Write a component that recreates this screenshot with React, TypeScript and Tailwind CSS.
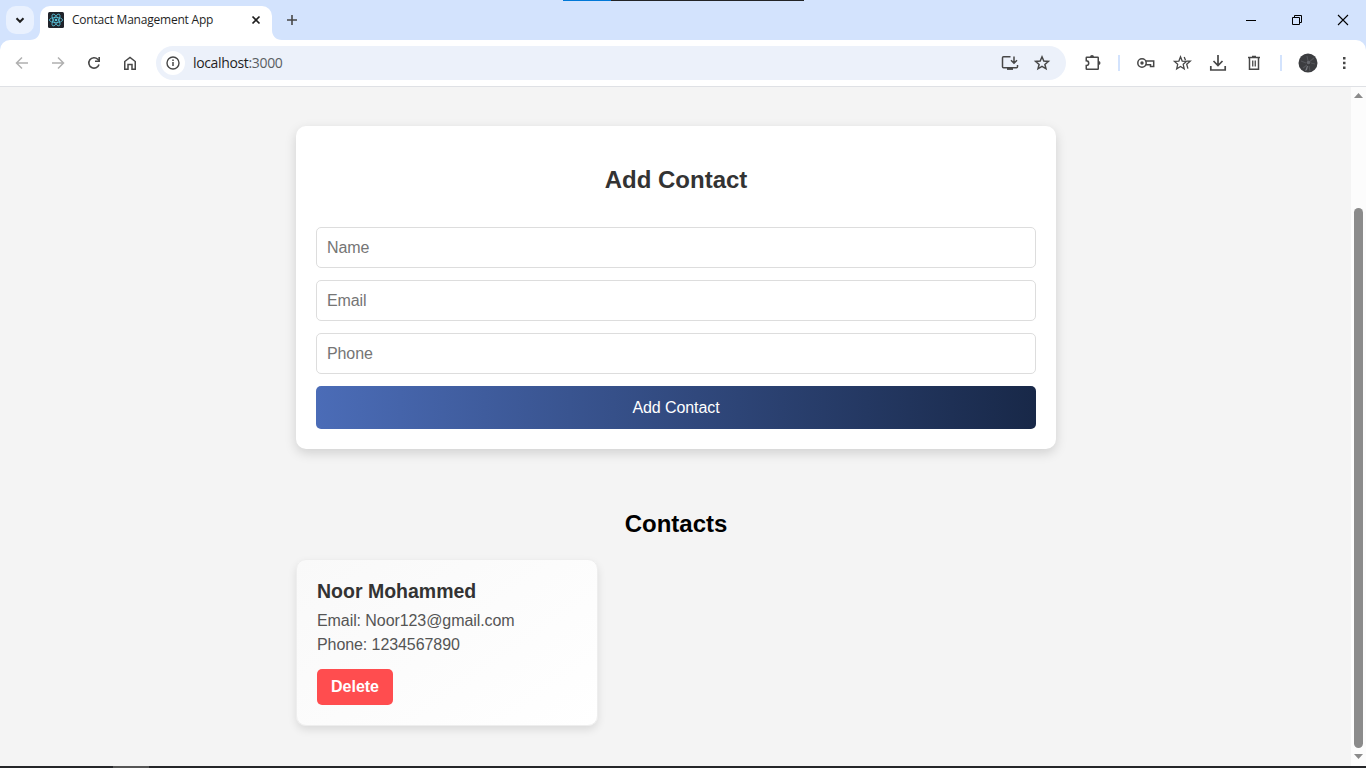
import React from 'react';

const chromeFont = "font-['Open_Sans','Noto_Sans',sans-serif]";

type IconProps = { children: React.ReactNode; className?: string; size?: number };

function Icon({ children, className = '', size = 20 }: IconProps) {
  return (
    <svg width={size} height={size} viewBox={`0 0 ${size} ${size}`} fill="none" stroke="currentColor" strokeWidth="1.5" className={`block shrink-0 ${className}`}>
      {children}
    </svg>
  );
}

function ReactLogo() {
  return (
    <svg width="16" height="16" viewBox="0 0 16 16" fill="none" stroke="#58c4dc" strokeWidth="0.8" className="block shrink-0">
      <rect width="16" height="16" rx="1.5" fill="#20232a" stroke="none" />
      <ellipse cx="8" cy="8" rx="6.6" ry="2.6" />
      <ellipse cx="8" cy="8" rx="6.6" ry="2.6" transform="rotate(60 8 8)" />
      <ellipse cx="8" cy="8" rx="6.6" ry="2.6" transform="rotate(120 8 8)" />
      <circle cx="8" cy="8" r="1.3" fill="#58c4dc" stroke="none" />
    </svg>
  );
}

function TabStrip() {
  return (
    <div className="flex h-10 shrink-0 bg-[#d3e3fd]">
      <div className="ml-1.5 mt-1.5 flex h-7 w-7 items-center justify-center rounded-[10px] bg-[#e9f1fe]">
        <Icon size={12} className="text-[#1f1f1f]"><path d="M2.5 4.3 6 7.8l3.5-3.5" strokeWidth="2" /></Icon>
      </div>
      <svg width="10" height="10" viewBox="0 0 10 10" className="-ml-1 mr-0 shrink-0 self-end"><path d="M10 0v10H0C6 10 10 6 10 0Z" fill="#fff" /></svg>
      <div className="mt-1.5 flex w-[232px] items-center rounded-t-[10px] bg-white pb-1.5 pl-2">
        <ReactLogo />
        <span className="ml-2 w-[176px] whitespace-nowrap text-[12px] leading-4 tracking-[-0.21px] text-[#1f1f1f]">Contact Management App</span>
        <Icon size={16} className="text-[#1f1f1f]"><path d="m4.5 4.5 7 7m0-7-7 7" strokeWidth="1.7" /></Icon>
      </div>
      <svg width="10" height="10" viewBox="0 0 10 10" className="shrink-0 self-end"><path d="M0 0v10h10C4 10 0 6 0 0Z" fill="#fff" /></svg>
      <Icon size={20} className="mt-2.5 text-[#474747]"><path d="M10 5v10M5 10h10" strokeWidth="1.6" /></Icon>
      <div className="flex-1">
        <div className="ml-[261px] flex h-px">
          <div className="w-12 bg-[#0078d7]" />
          <div className="w-[193px] bg-[#222426]" />
        </div>
      </div>
      <div className="mr-[15px] mt-3 flex gap-[30px]">
        <Icon size={16} className="text-black"><path d="M3 8.5h10" strokeWidth="1" /></Icon>
        <Icon size={16} className="text-black"><path d="M3.5 5.5h7v7h-7zM5.5 5.5v-2h7v7h-2" strokeWidth="1" /></Icon>
        <Icon size={16} className="text-black"><path d="m3 3 10 10M13 3 3 13" strokeWidth="1.1" /></Icon>
      </div>
    </div>
  );
}

function Toolbar() {
  return (
    <div className="h-[47px] shrink-0 bg-[#d3e3fd] text-[#474747]">
      <div className="flex h-full items-center rounded-t-[10px] border-b border-[#dfe1e5] bg-white pl-3">
        <Icon className="text-[#b0b0b0]"><path d="M16 10H4.5M10 4.5 4.5 10l5.5 5.5" /></Icon>
        <Icon className="ml-4 text-[#b0b0b0]"><path d="M4 10h11.5M10 4.5l5.5 5.5-5.5 5.5" /></Icon>
        <Icon className="ml-4"><path d="M15 11.5A5.2 5.2 0 1 1 13.8 6.3L15 7.5" strokeWidth="1.6" /><path d="M15.2 4v4.2H11" strokeWidth="1.6" /></Icon>
        <Icon className="ml-4"><path d="M4.75 8.5 10 4.5l5.250 4v7.750H12V11.500H8v4.750H4.750Z" /></Icon>
        <div className="ml-4 flex h-[34px] w-[910px] items-center rounded-full bg-[#ecf1fa] pl-[5px]">
          <div className="flex h-6 w-6 items-center justify-center rounded-full bg-white">
            <Icon><circle cx="10" cy="10" r="6" strokeWidth="1.4" /><path d="M10 9v4M10 6.5V8" /></Icon>
          </div>
          <span className="ml-2 flex-1 whitespace-nowrap text-[14px] leading-5 tracking-[-0.35px] text-[#1f1f1f]">localhost<span className="text-[#5a5e63]">:3000</span></span>
          <Icon><path d="M10.500 3.750H3.500a1 1 0 0 0-1 1v9a1 1 0 0 0 1 1h13a1 1 0 0 0 1-1V12M14 3.500v6M11 7.200l3 3 3-3" /><path d="M7 15.700h6" strokeWidth="2.400" /></Icon>
          <Icon className="ml-3 mr-3.5"><Star /></Icon>
        </div>
        <Icon className="ml-4">
          <path d="M4.750 4.250h11a.5.500 0 0 1 .5.500v11a.5.500 0 0 1-.5.500h-11a.5.500 0 0 1-.5-.5V12.500c3.300-.2 3.300-4.500 0-4.700V4.750a.5.500 0 0 1 .5-.5Z" />
          <path d="M8 4a2 2 0 0 1 4 0ZM16.500 8a2 2 0 0 1 0 4Z" fill="currentColor" stroke="none" />
        </Icon>
        <div className="ml-4 h-4 w-0.5 bg-[#d3e3fd]" />
        <Icon className="ml-4"><circle cx="6" cy="10" r="4.200" /><circle cx="6" cy="10" r="1.700" fill="currentColor" stroke="none" /><path d="M9.700 8h8v5.500h-3.200V11.700H9.700" /></Icon>
        <Icon className="ml-4"><path d="m8.500 3.800 1.700 4.300 4.300.3-3.300 2.900 1 4.500-3.700-2.400-3.800 2.400 1-4.500-3.300-2.900 4.500-.3ZM12.200 4l1.300 3.200M14.500 8.200h3.700l-3.500 3 1.200 4.500" strokeWidth="1.300" /></Icon>
        <Icon className="ml-4"><path d="M10 2v10M5.500 8l4.500 4.500L14.500 8M2.800 13v4h14.400v-4" strokeWidth="1.700" /></Icon>
        <Icon className="ml-4"><path d="M4 4.500h12M8 3.500h4M5.500 5v11.250h9V5" /><path d="M8.750 7.500v6M11.250 7.500v6" strokeWidth="1.300" /></Icon>
        <div className="ml-4 h-4 w-0.5 bg-[#d3e3fd]" />
        <svg width="20" height="20" viewBox="0 0 20 20" className="ml-4 shrink-0">
          <circle cx="10" cy="10" r="9.500" fill="#3c3d40" />
          <path d="m3 8 5 2m1-7 1 5m6-3-5 4m6 2-4-1M5 15l4-3m2 1 1 5" stroke="#535559" strokeWidth="1.200" />
          <circle cx="10.500" cy="9.500" r="1.800" fill="#66686d" />
          <path d="m9 13-2 5 2-1 1-4Z" fill="#797b80" />
        </svg>
        <Icon className="ml-4"><path d="M9 4h2.500v2.500H9zM9 8.800h2.500v2.500H9zM9 13.500h2.500V16H9z" fill="currentColor" stroke="none" /></Icon>
      </div>
    </div>
  );
}

function Star() {
  return <path d="m10 3.800 1.800 4.200 4.600.4-3.500 3 1.100 4.400-4-2.400-4 2.400 1.100-4.400-3.500-3 4.600-.4Z" strokeWidth="1.500" />;
}

function ContactForm() {
  return (
    <form className="flex flex-col rounded-[10px] bg-white p-5 shadow-[0_4px_12px_rgba(0,0,0,0.15)]" onSubmit={(event) => event.preventDefault()}>
      <h2 className="mb-[33px] mt-5 text-center text-2xl leading-7 font-bold text-[#333]">Add Contact</h2>
      {['Name', 'Email', 'Phone'].map((field) => (
        <input key={field} placeholder={field} aria-label={field} className="mb-3 h-[41px] rounded-[5px] border border-[#ddd] px-2.5 text-base tracking-[-0.1px] text-[#333] outline-none placeholder:text-[#757575]" />
      ))}
      <button className="h-[43px] rounded-[5px] bg-[linear-gradient(to_right,#4b6cb7,#182848)] text-base tracking-[-0.08px] text-white">Add Contact</button>
    </form>
  );
}

function ContactCard() {
  return (
    <article className="flex h-[167px] w-[302px] flex-col items-start rounded-[10px] border border-[#eee] bg-[linear-gradient(145deg,#f9f9f9,#fff)] px-5 pt-5 shadow-[0_4px_8px_rgba(0,0,0,0.1)]">
      <h3 className="text-[19.5px] leading-[22px] font-bold text-[#333]">Noor Mohammed</h3>
      <p className="mt-2.5 text-base leading-[18px] tracking-[-0.08px] text-[#555]">Email: Noor123@gmail.com</p>
      <p className="mt-1.5 text-base leading-[18px] tracking-[-0.08px] text-[#555]">Phone: 1234567890</p>
      <button className="mt-[15px] h-9 w-[76px] rounded-[5px] bg-[#ff4d4f] text-base font-bold text-white">Delete</button>
    </article>
  );
}

function Scrollbar() {
  return (
    <div className="flex w-[15px] shrink-0 flex-col items-center bg-[#fcfcfc]">
      <svg width="9" height="5" className="mt-1.5"><path d="M0 5h9L4.500 0Z" fill="#8b8b8b" /></svg>
      <div className="mt-[110px] h-[540px] w-[9px] rounded-full bg-[#8b8b8b]" />
      <svg width="9" height="5" className="mt-1.5"><path d="M0 0h9L4.500 5Z" fill="#8b8b8b" /></svg>
    </div>
  );
}

export default function App() {
  return (
    <div className="flex h-[768px] w-[1366px] flex-col overflow-hidden bg-[#f4f4f4]">
      <header className={chromeFont}>
        <TabStrip />
        <Toolbar />
      </header>
      <div className="flex min-h-0 flex-1 font-['Liberation_Sans',Arial,sans-serif]">
        <main className="flex-1">
          <div className="ml-[296px] mt-[39px] w-[760px]">
            <ContactForm />
            <h2 className="mb-[21px] mt-[61px] text-center text-2xl leading-7 font-bold text-black">Contacts</h2>
            <ContactCard />
          </div>
        </main>
        <Scrollbar />
      </div>
      <div className="flex h-0.5 shrink-0 bg-[#252629]">
        <div className="ml-[113px] w-9 bg-[#555]" />
      </div>
    </div>
  );
}
